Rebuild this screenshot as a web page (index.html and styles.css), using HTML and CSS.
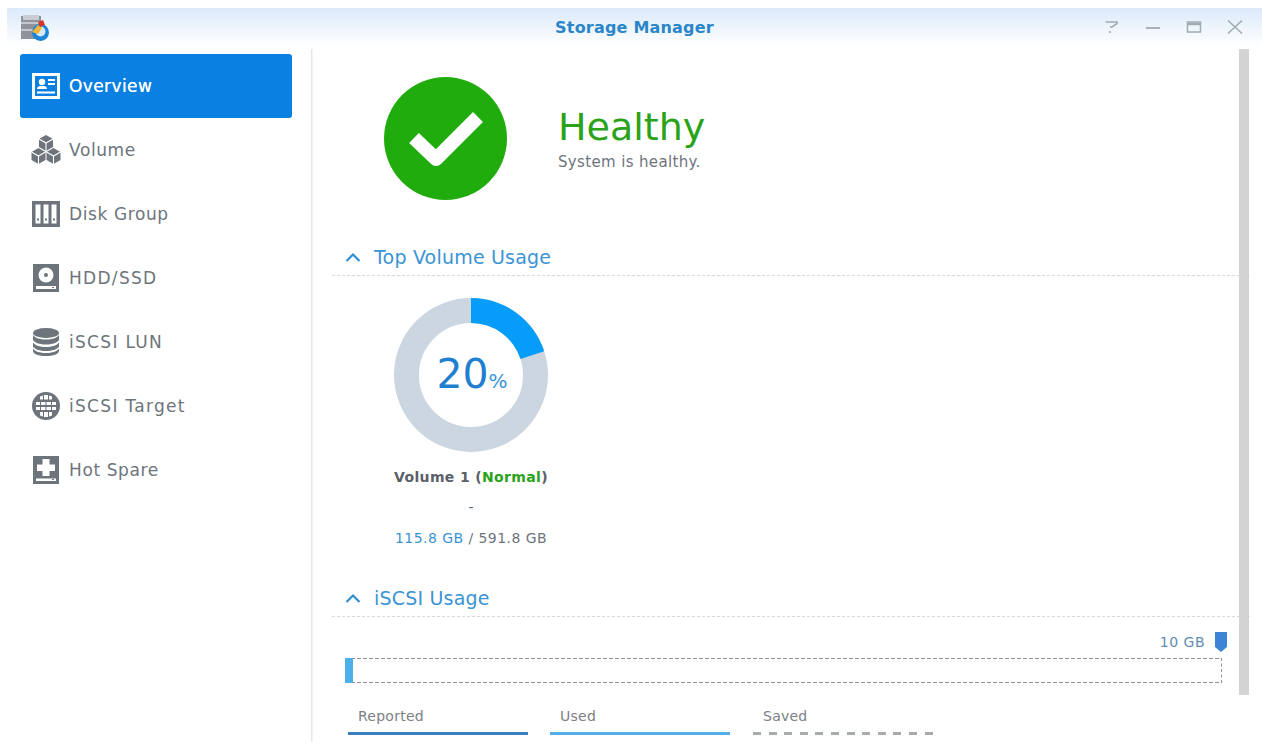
FILE: index.html
```html
<!DOCTYPE html>
<html lang="en">
<head>
<meta charset="utf-8">
<title>Storage Manager</title>
<link rel="stylesheet" href="styles.css">
</head>
<body>
<div class="window">
  <header class="titlebar">
    <svg class="app-icon" viewBox="0 0 32 32" width="32" height="32">
      <path d="M1 6h20v23H1z" fill="#8f949c"/>
      <path d="M3 5h16v5H3z" fill="#c9cdd3"/>
      <path d="M1 13h20M1 20h20" stroke="#d5d9de" stroke-width="1.500"/>
      <circle cx="20.500" cy="22.500" r="8.500" fill="#1b85d8"/>
      <circle cx="20.500" cy="21.500" r="5" fill="#d7e8f6"/>
      <path d="M12 22l6-7 4 3-4 6z" fill="#f2b632"/>
      <path d="M18 12l5-2 2 5-5 2z" fill="#d8322a"/>
    </svg>
    <h1 class="title">Storage Manager</h1>
    <div class="controls">
      <svg viewBox="0 0 16 16" width="16" height="16"><path d="M1.500 3h11.500v1.500L8 8H6M6 12v2" fill="none" stroke="#a2aab2" stroke-width="1.600"/></svg>
      <svg viewBox="0 0 16 16" width="16" height="16"><path d="M1 9h14" stroke="#a2aab2" stroke-width="1.800"/></svg>
      <svg viewBox="0 0 16 16" width="16" height="16"><path d="M1.500 3h13v10h-13z" fill="none" stroke="#a2aab2" stroke-width="1.500"/><path d="M1.500 5h13" stroke="#a2aab2" stroke-width="2.500"/></svg>
      <svg viewBox="0 0 16 16" width="16" height="16"><path d="M1 1.500l14 13M15 1.500l-14 13" stroke="#a2aab2" stroke-width="1.600"/></svg>
    </div>
  </header>
  <div class="main">
    <nav class="sidebar">
      <a class="nav-item active">
        <svg class="nav-icon" viewBox="0 0 28 28"><path fill-rule="evenodd" fill="#fff" d="M0 1h28v26H0zM3 4v20h22V4z"/><circle cx="10" cy="10" r="3.200" fill="#fff"/><path d="M5 17c0-2.500 2-3 5-3s5 .5 5 3zM16 7h7v2h-7zM16 11h7v2h-7zM5 19.500h18v2H5z" fill="#fff"/></svg>
        Overview
      </a>
      <a class="nav-item">
        <svg class="nav-icon nav-icon-wide" viewBox="0 0 30 30">
          <g fill="#6d747c"><path d="M15 0l7 4v8l-7 4-7-4V4z"/><path d="M7.500 13l7 4v8l-7 4-7-4v-8z"/><path d="M22.500 13l7 4v8l-7 4-7-4v-8z"/></g>
          <g fill="none" stroke="#fff" stroke-width="1.100"><path d="M8 4l7 4 7-4M15 8v8"/><path d="M.5 17l7 4 7-4M7.500 21v8"/><path d="M15.500 17l7 4 7-4M22.500 21v8"/></g>
        </svg>
        Volume
      </a>
      <a class="nav-item">
        <svg class="nav-icon" viewBox="0 0 28 28"><path fill="#6d747c" d="M0 1h28v26H0z"/><path fill="#fff" d="M3.500 4.500h5v19h-5zM11.500 4.500h5v19h-5zM19.500 4.500h5v19h-5z"/><path fill="#6d747c" d="M5 18.500h2v2H5zM13 18.500h2v2h-2zM21 18.500h2v2h-2z"/></svg>
        Disk Group
      </a>
      <a class="nav-item nav-caps">
        <svg class="nav-icon" viewBox="0 0 28 28"><path fill="#6d747c" d="M1 0h26v28H1z"/><circle cx="14" cy="11" r="7.500" fill="#fff"/><circle cx="14" cy="11" r="2" fill="#6d747c"/><path fill="#fff" d="M4 22h20v3H4z"/><path fill="#6d747c" d="M20 23h2v1h-2z"/></svg>
        HDD/SSD
      </a>
      <a class="nav-item nav-caps">
        <svg class="nav-icon" viewBox="0 0 28 28"><g fill="#6d747c"><ellipse cx="14" cy="5" rx="13" ry="5"/><path d="M1 7c2 3 7 4.500 13 4.500S25 10 27 7v5c-2 3-7 4.500-13 4.500S3 15 1 12z"/><path d="M1 14.500c2 3 7 4.500 13 4.500s11-1.500 13-4.500v4c-2 3-7 4.500-13 4.500S3 21.500 1 18.500z"/><path d="M1 20.500c2 3 7 4.500 13 4.500s11-1.500 13-4.500V23c0 3-6 5-13 5S1 26 1 23z"/></g></svg>
        iSCSI LUN
      </a>
      <a class="nav-item nav-caps">
        <svg class="nav-icon" viewBox="0 0 28 28"><circle cx="14" cy="14" r="14" fill="#6d747c"/><g fill="#fff"><path d="M8 4.500l3-1v4H8zM17 3.500l3 1v3h-3zM12 3h4v4.500h-4z"/><path d="M4 10h4v3H4zM9 10h4.500v3H9zM14.500 10H19v3h-4.500zM20 10h4v3h-4zM4 15h4v3H4zM9 15h4.500v3H9zM14.500 15H19v3h-4.500zM20 15h4v3h-4z"/><path d="M8 20h3v4.500l-3-1zM12 20h4v5h-4zM17 20h3v3.500l-3 1z"/></g></svg>
        iSCSI Target
      </a>
      <a class="nav-item">
        <svg class="nav-icon" viewBox="0 0 28 28"><path fill="#6d747c" d="M1 0h26v28H1z"/><path fill="#fff" d="M10.500 3h7v5.500H23v6.500h-5.500v5h-7v-5H5V8.500h5.500zM4 22.500h20V25H4z"/><path fill="#6d747c" d="M20 23h2v1h-2z"/></svg>
        Hot Spare
      </a>
    </nav>
    <main class="content">
      <div class="scrollbar"></div>
      <section class="health">
        <svg class="health-icon" viewBox="0 0 123 123" width="123" height="123">
          <circle cx="61.500" cy="61.500" r="61.500" fill="#21ac0e"/>
          <path d="M30 61l22 21 42-42" fill="none" stroke="#fff" stroke-width="14" stroke-linejoin="round"/>
        </svg>
        <div class="health-text">
          <div class="health-title">Healthy</div>
          <div class="health-sub">System is healthy.</div>
        </div>
      </section>
      <h2 class="section-head section-volume">
        <svg viewBox="0 0 16 10" width="16" height="10"><path d="M1.500 9L8 2.500 14.500 9" fill="none" stroke="#2f8fd0" stroke-width="2.200"/></svg>
        Top Volume Usage
      </h2>
      <section class="volume">
        <div class="donut">
          <svg viewBox="0 0 154 154" width="154" height="154">
            <circle cx="77" cy="77" r="64.500" fill="none" stroke="#ccd6e0" stroke-width="25"/>
            <path d="M77 0A77 77 0 0 1 150.200 53.200L126.500 60.900A52 52 0 0 0 77 25z" fill="#069cfa"/>
          </svg>
          <div class="donut-label"><span class="donut-num">20</span><span class="donut-pct">%</span></div>
        </div>
        <div class="vol-name">Volume 1 (<span class="ok">Normal</span>)</div>
        <div class="vol-dash">-</div>
        <div class="vol-size"><span class="used">115.8 GB</span> / 591.8 GB</div>
      </section>
      <h2 class="section-head section-iscsi">
        <svg viewBox="0 0 16 10" width="16" height="10"><path d="M1.500 9L8 2.500 14.500 9" fill="none" stroke="#2f8fd0" stroke-width="2.200"/></svg>
        iSCSI Usage
      </h2>
      <section class="iscsi">
        <div class="cap">
          <span>10 GB</span>
          <svg viewBox="0 0 12 20" width="12" height="20"><path d="M0 0h12v15l-6 5-6-5z" fill="#3b84d6"/></svg>
        </div>
        <div class="bar"><div class="bar-fill"></div></div>
        <div class="legend">
          <div class="legend-item l-reported">Reported</div>
          <div class="legend-item l-used">Used</div>
          <div class="legend-item l-saved">Saved</div>
        </div>
      </section>
    </main>
  </div>
</div>
</body>
</html>
```

FILE: styles.css
```css
* { box-sizing: border-box; }
html, body { margin: 0; height: 100%; background: #fff; overflow: hidden; }
body { font-family: "DejaVu Sans", Verdana, sans-serif; color: #5a6068; }
.window { height: 751px; padding: 8px 0 9px 7px; display: flex; flex-direction: column; }
.titlebar {
  height: 38px; flex: none; display: flex; align-items: center; position: relative;
  padding: 0 18px 0 13px;
  background: linear-gradient(#dbeafa, #fff);
}
.app-icon { width: 32px; height: 32px; margin-top: -3px; }
.title {
  position: absolute; left: 0; right: 0; top: 10px; margin: 0;
  text-align: center; font-size: 16px; line-height: 20px; font-weight: 700; letter-spacing: .2px; color: #2a86c8;
}
.controls { margin-left: auto; display: flex; gap: 25px; margin-right: 1px; }
.main { flex: 1; display: flex; min-height: 0; }
.sidebar { width: 304px; flex: none; padding: 8px 19px 0 13px; }
.nav-item {
  height: 64px; display: flex; align-items: center; gap: 9px; padding-left: 12px;
  border-radius: 3px; font-size: 17px; letter-spacing: .6px; color: #6d747c;
}
.nav-caps { letter-spacing: 1.3px; }
.nav-item.active { background: #0a80e2; color: #fff; letter-spacing: .4px; text-shadow: 0 0 .6px #fff; }
.nav-icon { width: 28px; height: 28px; flex: none; }
.nav-icon-wide { width: 30px; height: 30px; margin: 0 -1px; }
.content { flex: 1; border-left: 1px solid #e4e6e8; box-shadow: inset 1px 0 1px #f1f2f3; position: relative; margin-top: 3px; min-width: 0; }
.scrollbar { position: absolute; left: 927px; top: 0; width: 10px; height: 646px; background: #d3d3d3; }
.health { display: flex; align-items: flex-start; gap: 51px; padding: 28px 0 0 72px; }
.health-text { margin-top: 27px; }
.health-title { font-size: 38px; line-height: 46px; color: #2aa31b; }
.health-sub { font-size: 15px; line-height: 18px; letter-spacing: .35px; margin-top: 3px; color: #6d747c; }
.section-head {
  margin: 0 12px 0 20px; height: 36px; padding: 0 0 2px 13px; display: flex; align-items: center; gap: 13px;
  font-size: 19px; font-weight: 400; letter-spacing: .2px; color: #3a94d4;
  border-bottom: 1px dashed #d8dadc;
}
.section-volume { margin-top: 40px; }
.section-iscsi { margin-top: 0; }
.volume { width: 154px; margin: 22px 0 0 82px; text-align: center; height: 283px; }
.donut { position: relative; width: 154px; height: 154px; }
.donut svg { display: block; }
.donut-label { position: absolute; inset: 0; display: flex; align-items: baseline; justify-content: center; padding: 50px 0 0 2px; color: #1f7fd0; }
.donut-num { font-size: 41px; line-height: 52px; }
.donut-pct { font-size: 20px; color: #3a94d4; }
.vol-name { font-size: 14px; line-height: 18px; font-weight: 700; letter-spacing: .35px; margin-top: 16px; white-space: nowrap; color: #5a6068; }
.ok { color: #2aa31b; }
.vol-dash { font-size: 14px; line-height: 18px; margin-top: 12px; }
.vol-size { font-size: 14px; line-height: 18px; letter-spacing: .45px; margin: 13px -5px 0; white-space: nowrap; color: #6d747c; }
.used { color: #3a94d4; }
.iscsi { margin: 0 0 0 33px; padding-right: 40px; }
.cap { display: flex; justify-content: flex-end; align-items: center; gap: 10px; height: 20px; margin: 15px -5px 0 0; font-size: 14px; letter-spacing: .5px; color: #5f8db5; }
.bar {
  height: 25px; margin-top: 6px; border-right: 1px dashed #8d9298;
  background:
    repeating-linear-gradient(90deg, #8d9298 0 4px, transparent 4px 6px) top / 100% 1px no-repeat,
    repeating-linear-gradient(90deg, #8d9298 0 4px, transparent 4px 6px) bottom / 100% 1px no-repeat;
}
.bar-fill { width: 8px; height: 25px; background: #4db0ea; }
.legend { display: flex; gap: 22px; margin: 25px 0 0 3px; }
.legend-item { width: 180px; height: 27px; padding-left: 10px; font-size: 14px; line-height: 16px; letter-spacing: .25px; color: #7b8086; }
.l-reported { border-bottom: 3px solid #3b7fc0; }
.l-used { border-bottom: 3px solid #56aee6; }
.l-saved {
  margin-left: 1px;
  background: repeating-linear-gradient(90deg, #a9acaf 0 8px, transparent 8px 15.6px) bottom / 100% 3px no-repeat;
}
```
